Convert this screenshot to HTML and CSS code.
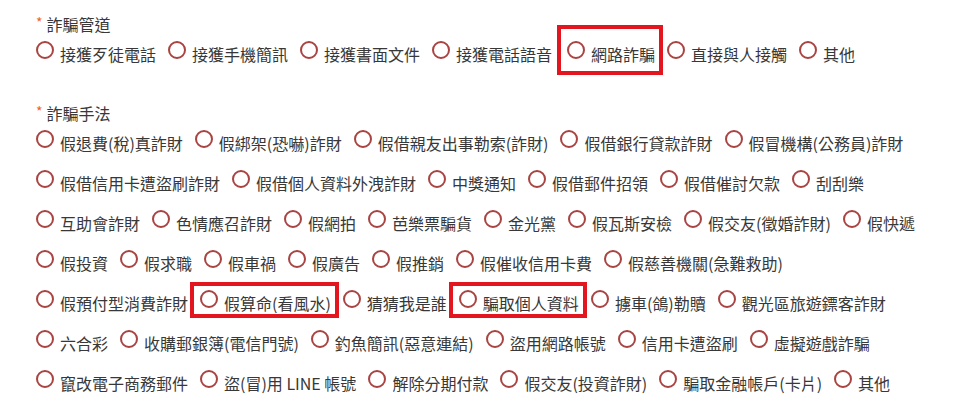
FILE: index.html
```html
<!DOCTYPE html>
<html>
<head>
  <title>詐騙類型</title>
  <link rel="stylesheet" href="styles.css">
</head>
<body>
  <div class="container">
    <div class="group group-channel">
      <div class="group-label"><span class="required">*</span>詐騙管道</div>
      <div class="options">
        <label class="option"><input type="radio" name="channel"><span>接獲歹徒電話</span></label>
        <label class="option"><input type="radio" name="channel"><span>接獲手機簡訊</span></label>
        <label class="option"><input type="radio" name="channel"><span>接獲書面文件</span></label>
        <label class="option"><input type="radio" name="channel"><span>接獲電話語音</span></label>
        <label class="option mark mark-top"><input type="radio" name="channel"><span>網路詐騙</span></label>
        <label class="option"><input type="radio" name="channel"><span>直接與人接觸</span></label>
        <label class="option"><input type="radio" name="channel"><span>其他</span></label>
      </div>
    </div>

    <div class="group group-method">
      <div class="group-label"><span class="required">*</span>詐騙手法</div>
      <div class="options">
        <label class="option"><input type="radio" name="method"><span>假退費(稅)真詐財</span></label>
        <label class="option"><input type="radio" name="method"><span>假綁架(恐嚇)詐財</span></label>
        <label class="option"><input type="radio" name="method"><span>假借親友出事勒索(詐財)</span></label>
        <label class="option"><input type="radio" name="method"><span>假借銀行貸款詐財</span></label>
        <label class="option"><input type="radio" name="method"><span>假冒機構(公務員)詐財</span></label>
        <label class="option"><input type="radio" name="method"><span>假借信用卡遭盜刷詐財</span></label>
        <label class="option"><input type="radio" name="method"><span>假借個人資料外洩詐財</span></label>
        <label class="option"><input type="radio" name="method"><span>中獎通知</span></label>
        <label class="option"><input type="radio" name="method"><span>假借郵件招領</span></label>
        <label class="option"><input type="radio" name="method"><span>假借催討欠款</span></label>
        <label class="option"><input type="radio" name="method"><span>刮刮樂</span></label>
        <label class="option"><input type="radio" name="method"><span>互助會詐財</span></label>
        <label class="option"><input type="radio" name="method"><span>色情應召詐財</span></label>
        <label class="option"><input type="radio" name="method"><span>假網拍</span></label>
        <label class="option"><input type="radio" name="method"><span>芭樂票騙貨</span></label>
        <label class="option"><input type="radio" name="method"><span>金光黨</span></label>
        <label class="option"><input type="radio" name="method"><span>假瓦斯安檢</span></label>
        <label class="option"><input type="radio" name="method"><span>假交友(徵婚詐財)</span></label>
        <label class="option"><input type="radio" name="method"><span>假快遞</span></label>
        <label class="option"><input type="radio" name="method"><span>假投資</span></label>
        <label class="option"><input type="radio" name="method"><span>假求職</span></label>
        <label class="option"><input type="radio" name="method"><span>假車禍</span></label>
        <label class="option"><input type="radio" name="method"><span>假廣告</span></label>
        <label class="option"><input type="radio" name="method"><span>假推銷</span></label>
        <label class="option"><input type="radio" name="method"><span>假催收信用卡費</span></label>
        <label class="option"><input type="radio" name="method"><span>假慈善機關(急難救助)</span></label>
        <label class="option"><input type="radio" name="method"><span>假預付型消費詐財</span></label>
        <label class="option mark mark-low"><input type="radio" name="method"><span>假算命(看風水)</span></label>
        <label class="option"><input type="radio" name="method"><span>猜猜我是誰</span></label>
        <label class="option mark mark-low"><input type="radio" name="method"><span>騙取個人資料</span></label>
        <label class="option"><input type="radio" name="method"><span>擄車(鴿)勒贖</span></label>
        <label class="option"><input type="radio" name="method"><span>觀光區旅遊鏢客詐財</span></label>
        <label class="option"><input type="radio" name="method"><span>六合彩</span></label>
        <label class="option"><input type="radio" name="method"><span>收購郵銀簿(電信門號)</span></label>
        <label class="option"><input type="radio" name="method"><span>釣魚簡訊(惡意連結)</span></label>
        <label class="option"><input type="radio" name="method"><span>盜用網路帳號</span></label>
        <label class="option"><input type="radio" name="method"><span>信用卡遭盜刷</span></label>
        <label class="option"><input type="radio" name="method"><span>虛擬遊戲詐騙</span></label>
        <label class="option"><input type="radio" name="method"><span>竄改電子商務郵件</span></label>
        <label class="option"><input type="radio" name="method"><span>盜(冒)用 LINE 帳號</span></label>
        <label class="option"><input type="radio" name="method"><span>解除分期付款</span></label>
        <label class="option"><input type="radio" name="method"><span>假交友(投資詐財)</span></label>
        <label class="option"><input type="radio" name="method"><span>騙取金融帳戶(卡片)</span></label>
        <label class="option"><input type="radio" name="method"><span>其他</span></label>
      </div>
    </div>
  </div>
</body>
</html>
```

FILE: styles.css
```css
  body {
    font-family: "Noto Sans CJK TC", "Microsoft JhengHei", sans-serif;
    font-size: 16px;
    color: #383838;
    background-color: #fff;
    margin: 0;
    padding: 0;
  }

  .container {
    padding: 12px 0 0 36px;
    width: 904px;
  }

  .group-method {
    margin-top: 27px;
  }

  .group-label {
    height: 20px;
    line-height: 20px;
    margin-bottom: 2px;
  }

  .required {
    color: #f0622a;
    font-size: 14px;
    margin-right: 4px;
    vertical-align: 3px;
  }

  .options {
    display: flex;
    flex-wrap: wrap;
    column-gap: 12px;
  }

  .option {
    display: flex;
    align-items: center;
    height: 40px;
    line-height: 40px;
    cursor: pointer;
  }

  .option input[type="radio"] {
    appearance: none;
    -webkit-appearance: none;
    width: 18px;
    height: 18px;
    margin: 0 6px 9px 0;
    border: 2px solid #a94442;
    border-radius: 50%;
    box-sizing: border-box;
    background-color: #fff;
    flex-shrink: 0;
  }

  .option input[type="radio"]:checked {
    background: radial-gradient(#a94442 0 4px, #fff 5px);
  }

  /* 紅框標示 */
  .mark {
    position: relative;
  }

  .mark::after {
    content: "";
    position: absolute;
    left: -10px;
    right: -8px;
    border: 4px solid #e3161f;
    pointer-events: none;
  }

  .mark-top {
    margin-left: 3px;
  }

  .mark-top::after {
    top: -9px;
    bottom: -1px;
  }

  .mark-low::after {
    top: -1px;
    bottom: 5px;
  }
```
